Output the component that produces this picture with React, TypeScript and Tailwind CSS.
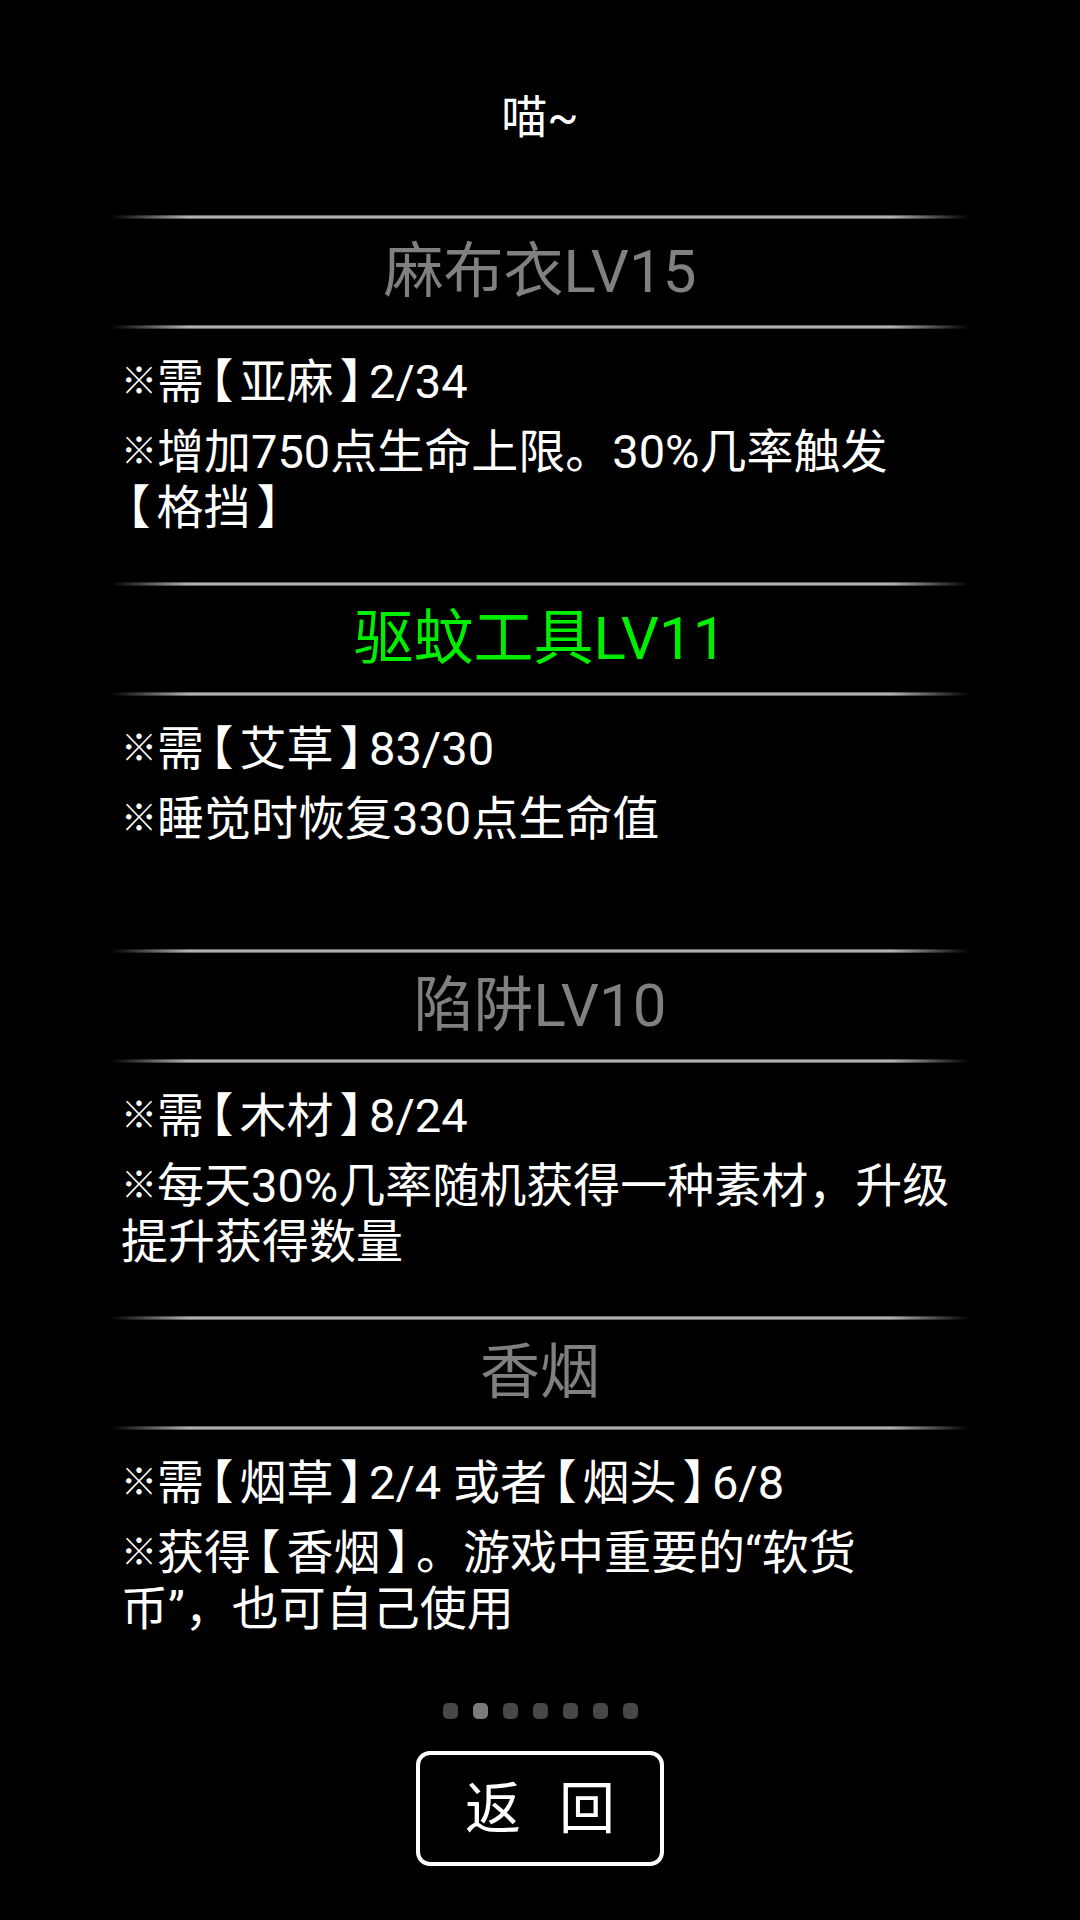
import React from "react";

type Item = {
  title: string;
  highlight?: boolean;
  // each paragraph is a list of visual lines
  paras: string[][];
};

const items: Item[] = [
  {
    title: "麻布衣LV15",
    paras: [["※需【亚麻】2/34"], ["※增加750点生命上限。30%几率触发", "【格挡】"]],
  },
  {
    title: "驱蚊工具LV11",
    highlight: true,
    paras: [["※需【艾草】83/30"], ["※睡觉时恢复330点生命值"]],
  },
  {
    title: "陷阱LV10",
    paras: [["※需【木材】8/24"], ["※每天30%几率随机获得一种素材，升级", "提升获得数量"]],
  },
  {
    title: "香烟",
    paras: [["※需【烟草】2/4 或者【烟头】6/8"], ["※获得【香烟】。游戏中重要的“软货", "币”，也可自己使用"]],
  },
];

// The game font draws ※ small and the lenticular brackets narrow,
// so those glyphs get their own spans.
function Rich({ text }: { text: string }) {
  const parts = text.split(/([※【】])/).filter((p) => p !== "");
  return (
    <>
      {parts.map((p, i) => {
        if (p === "※") {
          return (
            <span key={i} className="text-[36px] font-medium align-[4px]">
              ※
            </span>
          );
        }
        if (p === "【" || p === "】") {
          return (
            <span key={i} className="mx-[6px] [font-feature-settings:'halt']">
              {p}
            </span>
          );
        }
        return <React.Fragment key={i}>{p}</React.Fragment>;
      })}
    </>
  );
}

function Divider() {
  return (
    <div className="h-[4px] w-[858px] bg-[linear-gradient(to_bottom,#4a4a4a,#d2d2d2_50%,#4a4a4a)] [mask-image:linear-gradient(to_right,transparent,black_9%,black_91%,transparent)]" />
  );
}

function Section({ item }: { item: Item }) {
  return (
    <div className="flex flex-col items-center">
      <Divider />
      <div
        className={
          item.highlight
            ? "flex h-[106px] items-center justify-center text-[60px] leading-[70px] text-[#00ee00]"
            : "flex h-[106px] items-center justify-center text-[60px] leading-[70px] text-[#808080]"
        }
      >
        {item.title}
      </div>
      <Divider />
      <div className="flex h-[253px] w-[838px] flex-col gap-[14px] pt-[25px] text-[47px] leading-[56px] text-white">
        {item.paras.map((para, i) => (
          <p key={i}>
            {para.map((line, j) => (
              <span key={j} className="block whitespace-nowrap">
                <Rich text={line} />
              </span>
            ))}
          </p>
        ))}
      </div>
    </div>
  );
}

export default function App() {
  const dots = [0, 1, 2, 3, 4, 5, 6];
  return (
    <div
      className="flex min-h-screen w-full flex-col items-center bg-black"
      style={{ fontFamily: "Roboto, 'Noto Sans CJK SC', sans-serif" }}
    >
      <div className="pt-[89px] text-[46px] leading-[56px] text-white">喵~</div>

      <div className="mt-[70px] flex flex-col items-center">
        {items.map((it) => (
          <Section key={it.title} item={it} />
        ))}
      </div>

      {/* page indicator */}
      <div className="mt-[20px] flex gap-[15px]">
        {dots.map((d) => (
          <div
            key={d}
            className={
              d === 1
                ? "h-[16px] w-[15px] rounded-[5px] bg-[#7a7a7a]"
                : "h-[16px] w-[15px] rounded-[5px] bg-[#474747]"
            }
          />
        ))}
      </div>

      <button className="mt-[32px] flex h-[115px] w-[248px] items-center justify-center gap-[38px] rounded-[14px] border-[4px] border-white bg-black text-[56px] leading-[60px] text-white">
        <span>返</span>
        <span>回</span>
      </button>
    </div>
  );
}
